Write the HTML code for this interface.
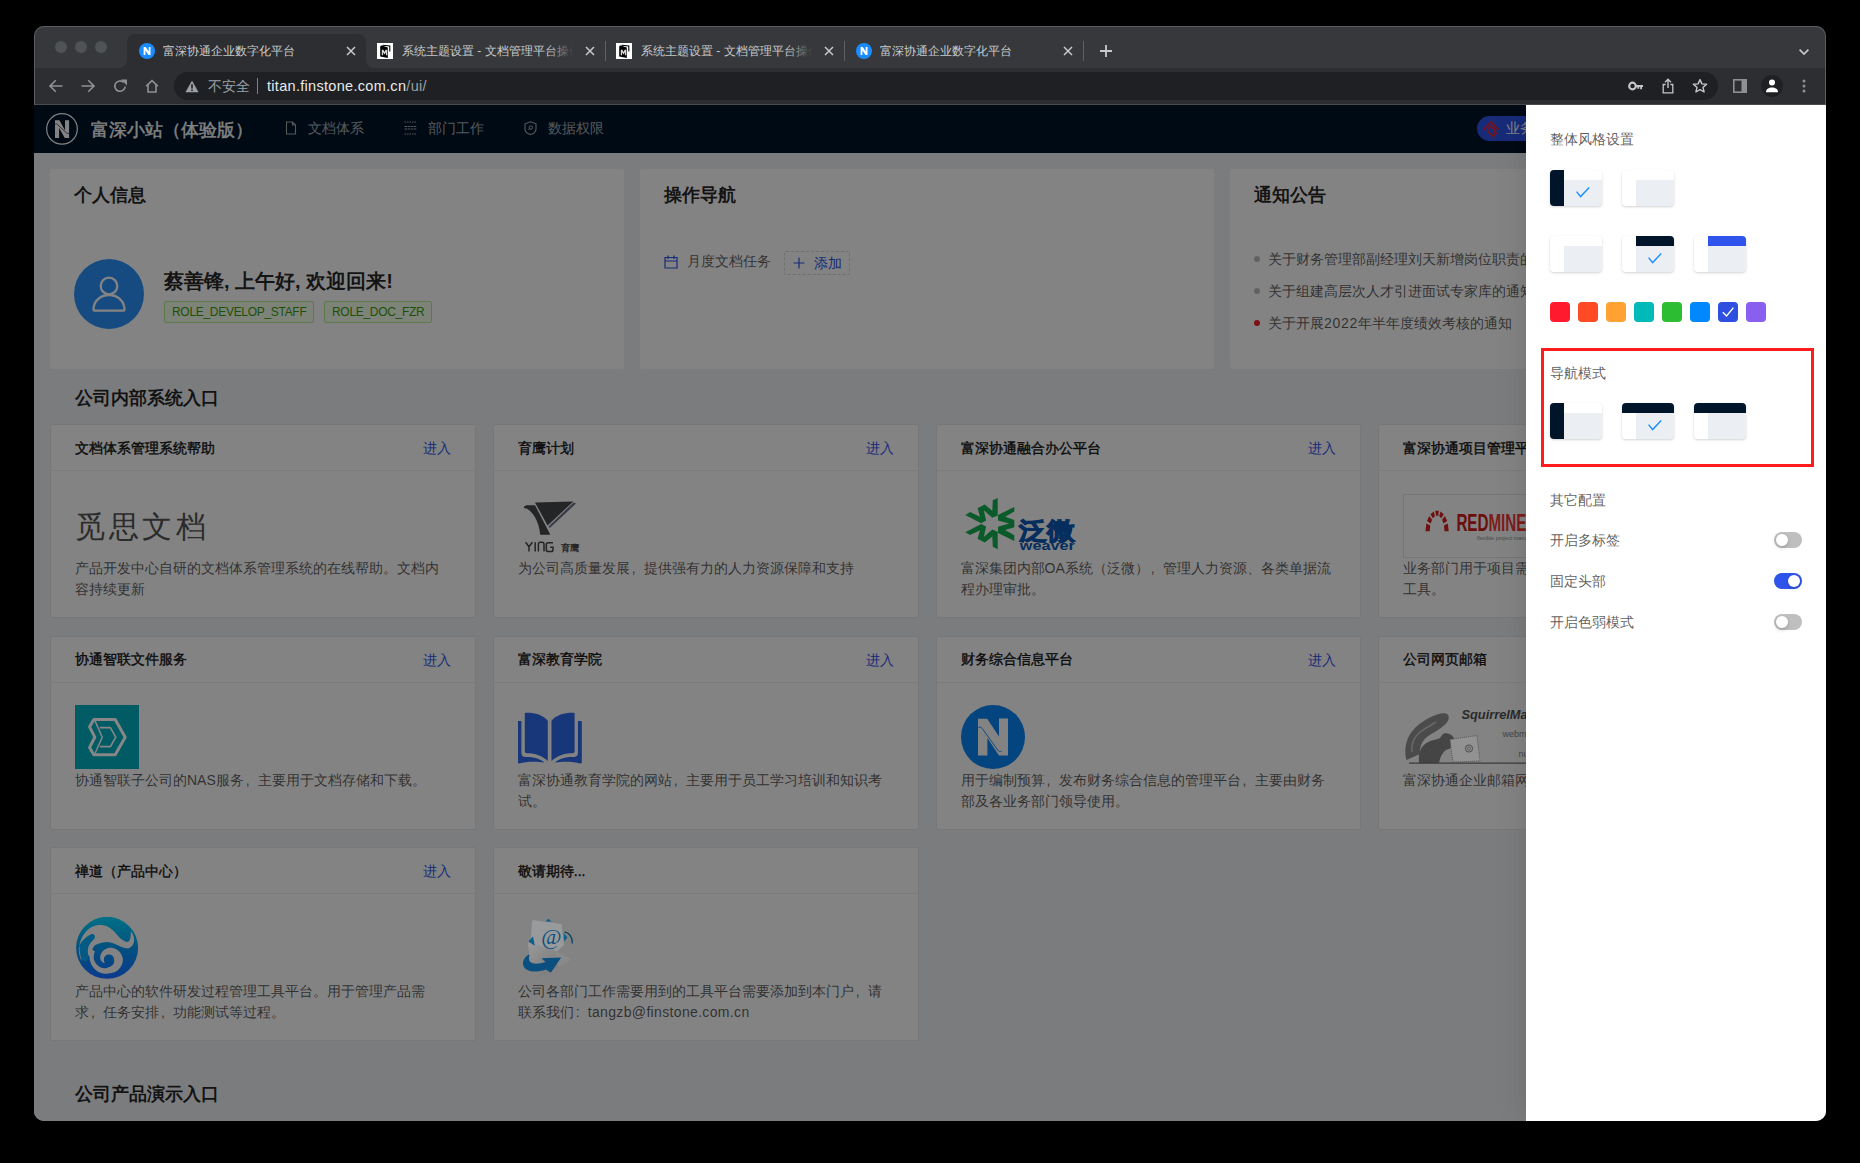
<!DOCTYPE html>
<html><head><meta charset="utf-8">
<style>
*{box-sizing:border-box;margin:0;padding:0}
html,body{width:1860px;height:1163px;overflow:hidden;background:#000;font-family:"Liberation Sans",sans-serif}
.abs{position:absolute}
.cm{display:inline-block;width:14px;text-indent:2px;font-size:14px}
.lg{z-index:6}
#win{position:absolute;left:34px;top:26px;width:1792px;height:1095px;border-radius:10px;overflow:hidden;background:#36383b}
#winborder{position:absolute;left:34px;top:26px;width:1792px;height:79px;border-radius:10px 10px 0 0;border:1px solid #5c5d60;border-bottom:none;pointer-events:none;z-index:50}
.tab{position:absolute;top:8px;height:34px;width:239px}
.tab .ttl{position:absolute;left:36px;top:9px;font-size:12px;line-height:16px;color:#c8cacc;white-space:nowrap;overflow:hidden;width:142px}
.tab .fade{position:absolute;left:150px;top:8px;width:30px;height:18px;background:linear-gradient(90deg,rgba(55,56,59,0),#37383b)}
.tab .x{position:absolute;left:219px;top:12px}
.sep{position:absolute;top:15px;width:1px;height:20px;background:#606164}
#toolbar{position:absolute;left:0;top:42px;width:1792px;height:36px;background:#2d2e31}
#tbline{position:absolute;left:0;top:78px;width:1792px;height:1px;background:#4a4b4e}
#omni{position:absolute;left:140px;top:4px;width:1544px;height:28px;border-radius:14px;background:#1f2023}
#page{position:absolute;left:0;top:79px;width:1792px;height:1016px;background:#f0f2f5;overflow:hidden}
#hdr{position:absolute;left:0;top:0;width:1792px;height:48px;background:#001529}
.card{position:absolute;background:#fff;border-radius:2px}
.ctitle{position:absolute;left:24px;top:15px;font-size:18px;line-height:22px;font-weight:bold;color:rgba(0,0,0,.85)}
.sect{position:absolute;left:41px;font-size:18px;line-height:22px;font-weight:bold;color:rgba(0,0,0,.85)}
.app{position:absolute;background:#fff;border:1px solid #e8e8e8;border-radius:2px;width:425.75px;height:194px}
.app .hd{position:absolute;left:0;top:0;right:0;height:46px;border-bottom:1px solid #f0f0f0}
.app .hd .t{position:absolute;left:24px;top:11.5px;font-size:14px;line-height:22px;color:rgba(0,0,0,.85);white-space:nowrap;-webkit-text-stroke:.45px rgba(0,0,0,.85)}
.app .hd .go{position:absolute;right:24px;top:12px;font-size:14px;line-height:22px;color:#2f54eb}
.app .logo{position:absolute;left:24px;top:69px;width:64px;height:64px}
.app .desc{position:absolute;left:24px;top:133px;width:380px;font-size:14px;line-height:21px;color:rgba(0,0,0,.65)}
#mask{z-index:5;position:absolute;left:0;top:0;width:1792px;height:1016px;background:rgba(0,0,0,.486)}
#drawer{z-index:20;box-shadow:-6px 0 16px -8px rgba(0,0,0,.08),-9px 0 28px 0 rgba(0,0,0,.05);position:absolute;left:1492px;top:0;width:300px;height:1016px;background:#fff}
.dt{position:absolute;left:24px;font-size:14px;line-height:20px;color:rgba(0,0,0,.65)}
.blk{position:absolute;width:52px;height:36px;border-radius:4px;background:#ebeef3;box-shadow:0 1px 2.5px rgba(0,0,0,.18);overflow:hidden}
.blk i{position:absolute;display:block}
.sw{position:absolute;top:197px;width:20px;height:20px;border-radius:4px}
.tog{position:absolute;left:248px;width:28px;height:16px;border-radius:8px;background:#bfbfbf}
.tog b{position:absolute;top:2px;left:2px;width:12px;height:12px;border-radius:6px;background:#fff;box-shadow:0 2px 4px rgba(0,35,11,.2)}
</style></head><body>
<div id="win">
  <!-- traffic lights -->
  <div class="abs" style="left:21px;top:15px;width:12px;height:12px;border-radius:6px;background:#505356"></div>
  <div class="abs" style="left:41px;top:15px;width:12px;height:12px;border-radius:6px;background:#505356"></div>
  <div class="abs" style="left:61px;top:15px;width:12px;height:12px;border-radius:6px;background:#505356"></div>
  <!-- active tab -->
  <div class="abs" style="left:93px;top:8px;width:239px;height:34px;background:#2d2e31;border-radius:8px 8px 0 0"></div>
  <div class="abs" style="left:85px;top:34px;width:8px;height:8px;background:#2d2e31"><div style="width:8px;height:8px;background:#36383b;border-bottom-right-radius:8px"></div></div><div class="abs" style="left:332px;top:34px;width:8px;height:8px;background:#2d2e31"><div style="width:8px;height:8px;background:#36383b;border-bottom-left-radius:8px"></div></div><div id="tabs"><svg class="abs" style="left:105px;top:17px" width="16" height="16" viewBox="0 0 16 16"><circle cx="8" cy="8" r="8" fill="#1a8cff"/><path d="M4.6 12V4h2.1l3 4.6V4h1.8v8h-2L6.4 7.4V12z" fill="#fff"/></svg><div class="abs" style="left:129px;top:17px;font-size:12px;line-height:16px;color:#c8cacc;white-space:nowrap;overflow:hidden;width:170px">富深协通企业数字化平台</div><svg class="abs" style="left:312px;top:20px" width="10" height="10" viewBox="0 0 10 10"><path d="M1 1l8 8M9 1l-8 8" stroke="#c8cacc" stroke-width="1.5"/></svg><svg class="abs" style="left:343px;top:17px" width="16" height="16" viewBox="0 0 16 16"><rect width="16" height="16" fill="#fff"/><path d="M3.2 3.6Q3.6 2.4 5 2.6L10.8 4.6V14.9L3.2 13.4z" fill="#000"/><path d="M5.6 2.2 12.8 2.9V8.4" stroke="#000" stroke-width="1.1" fill="none"/><path d="M4.8 12.2V6.8H6.4L7.5 9 8.6 6.8H10.2V12.2H8.9V9.2L7.5 11.4 6.1 9.2V12.2z" fill="#d8d8d8"/></svg><div class="abs" style="left:368px;top:17px;font-size:12px;line-height:16px;color:#c8cacc;white-space:nowrap;overflow:hidden;width:176px">系统主题设置 - 文档管理平台操作手册</div><div class="abs" style="left:514px;top:16px;width:30px;height:18px;background:linear-gradient(90deg,rgba(54,56,59,0),#36383b 85%)"></div><svg class="abs" style="left:551px;top:20px" width="10" height="10" viewBox="0 0 10 10"><path d="M1 1l8 8M9 1l-8 8" stroke="#c8cacc" stroke-width="1.5"/></svg><svg class="abs" style="left:582px;top:17px" width="16" height="16" viewBox="0 0 16 16"><rect width="16" height="16" fill="#fff"/><path d="M3.2 3.6Q3.6 2.4 5 2.6L10.8 4.6V14.9L3.2 13.4z" fill="#000"/><path d="M5.6 2.2 12.8 2.9V8.4" stroke="#000" stroke-width="1.1" fill="none"/><path d="M4.8 12.2V6.8H6.4L7.5 9 8.6 6.8H10.2V12.2H8.9V9.2L7.5 11.4 6.1 9.2V12.2z" fill="#d8d8d8"/></svg><div class="abs" style="left:607px;top:17px;font-size:12px;line-height:16px;color:#c8cacc;white-space:nowrap;overflow:hidden;width:176px">系统主题设置 - 文档管理平台操作手册</div><div class="abs" style="left:753px;top:16px;width:30px;height:18px;background:linear-gradient(90deg,rgba(54,56,59,0),#36383b 85%)"></div><svg class="abs" style="left:790px;top:20px" width="10" height="10" viewBox="0 0 10 10"><path d="M1 1l8 8M9 1l-8 8" stroke="#c8cacc" stroke-width="1.5"/></svg><svg class="abs" style="left:822px;top:17px" width="16" height="16" viewBox="0 0 16 16"><circle cx="8" cy="8" r="8" fill="#1a8cff"/><path d="M4.6 12V4h2.1l3 4.6V4h1.8v8h-2L6.4 7.4V12z" fill="#fff"/></svg><div class="abs" style="left:846px;top:17px;font-size:12px;line-height:16px;color:#c8cacc;white-space:nowrap;overflow:hidden;width:170px">富深协通企业数字化平台</div><svg class="abs" style="left:1029px;top:20px" width="10" height="10" viewBox="0 0 10 10"><path d="M1 1l8 8M9 1l-8 8" stroke="#c8cacc" stroke-width="1.5"/></svg><div class="sep" style="left:571px"></div><div class="sep" style="left:810px"></div><div class="sep" style="left:1049px"></div><svg class="abs" style="left:1065px;top:18px" width="14" height="14" viewBox="0 0 14 14"><path d="M7 1v12M1 7h12" stroke="#c8cacc" stroke-width="1.8"/></svg><svg class="abs" style="left:1764px;top:21.5px" width="12" height="8" viewBox="0 0 12 8"><path d="M1.6 1.6l4.4 4.4 4.4-4.4" stroke="#c8cacc" stroke-width="1.6" fill="none"/></svg></div>
  <div id="toolbar"><svg class="abs" style="left:14px;top:10px" width="16" height="16" viewBox="0 0 16 16"><path d="M14.5 8H2.2M7.8 2.2 2 8l5.8 5.8" stroke="#8e9093" stroke-width="1.6" fill="none"/></svg><svg class="abs" style="left:46px;top:10px" width="16" height="16" viewBox="0 0 16 16"><path d="M1.5 8h12.3M8.2 2.2 14 8l-5.8 5.8" stroke="#8e9093" stroke-width="1.6" fill="none"/></svg><svg class="abs" style="left:78px;top:10px" width="16" height="16" viewBox="0 0 16 16"><path d="M13.2 8.6A5.2 5.2 0 1 1 11.6 4.3" stroke="#8e9093" stroke-width="1.6" fill="none"/><path d="M9 1.5h6v6z" fill="#8e9093"/></svg><svg class="abs" style="left:110px;top:10px" width="16" height="16" viewBox="0 0 16 16"><path d="M2.2 8.2 8 2.6l5.8 5.6M4 7v7h8V7" stroke="#8e9093" stroke-width="1.6" fill="none" stroke-linejoin="miter"/></svg><div id="omni"><svg class="abs" style="left:11px;top:8px" width="14" height="13" viewBox="0 0 14 13"><path d="M7 .5 13.6 12.3H.4z" fill="#9aa0a6"/><path d="M6.2 4.3h1.6v4.3H6.2zM6.2 9.6h1.6v1.5H6.2z" fill="#1f2023"/></svg><div class="abs" style="left:34px;top:4px;font-size:14px;line-height:20px;color:#9aa0a6;white-space:nowrap">不安全</div><div class="abs" style="left:83px;top:6px;width:1px;height:16px;background:#7d8185"></div><div class="abs" style="left:93px;top:4px;font-size:14.5px;line-height:20px;color:#e8eaed;white-space:nowrap;letter-spacing:.3px">titan.finstone.com.cn<span style="color:#9aa0a6">/ui/</span></div><svg class="abs" style="left:1454px;top:7px" width="16" height="14" viewBox="0 0 16 14"><circle cx="4.5" cy="7" r="3.3" stroke="#c4c6c9" stroke-width="2.2" fill="none"/><path d="M7.5 5.9h7.5v2.2h-1v2.2h-1.8V8.1h-1v1.6H9.4V8.1H7.5z" fill="#c4c6c9"/></svg><svg class="abs" style="left:1488px;top:6px" width="12" height="16" viewBox="0 0 12 16"><path d="M6 10V1.5M3 4.3 6 1.3l3 3" stroke="#c4c6c9" stroke-width="1.4" fill="none"/><path d="M3.6 6.5H1.2v8.3h9.6V6.5H8.4" stroke="#c4c6c9" stroke-width="1.3" fill="none"/></svg><svg class="abs" style="left:1518px;top:6px" width="16" height="16" viewBox="0 0 16 16"><path d="M8 1.6l1.9 4.3 4.7.4-3.6 3.1 1.1 4.6L8 11.6 3.9 14l1.1-4.6L1.4 6.3l4.7-.4z" stroke="#c4c6c9" stroke-width="1.4" fill="none" stroke-linejoin="round"/></svg></div><svg class="abs" style="left:1699px;top:11px" width="14" height="14" viewBox="0 0 14 14"><rect x=".8" y=".8" width="12.4" height="12.4" stroke="#8e9093" stroke-width="1.6" fill="none"/><rect x="8.5" y="1" width="4.5" height="12" fill="#8e9093"/></svg><div class="abs" style="left:1727px;top:7px;width:22px;height:22px;border-radius:11px;background:#1f2023"></div><svg class="abs" style="left:1731px;top:11px" width="14" height="14" viewBox="0 0 14 14"><circle cx="7" cy="3.6" r="3" fill="#fff"/><path d="M1 13.2c0-3 2.7-4.6 6-4.6s6 1.6 6 4.6z" fill="#fff"/></svg><svg class="abs" style="left:1768px;top:11px" width="4" height="14" viewBox="0 0 4 14"><circle cx="2" cy="2" r="1.5" fill="#8e9093"/><circle cx="2" cy="7" r="1.5" fill="#8e9093"/><circle cx="2" cy="12" r="1.5" fill="#8e9093"/></svg></div>
  <div id="tbline"></div>
  <div id="page">
    <div id="hdr"><svg class="abs" style="left:12px;top:8px" width="32" height="32" viewBox="0 0 32 32"><circle cx="16" cy="15.9" r="15.3" stroke="#fff" stroke-width="1.2" fill="none"/><path d="M9 25V7.3h4.4L19 17.2V7.3h4.1v17.7h-4.3L13.1 15V25z" fill="#fff"/><path d="M9.1 11.3C10 10.5 10.9 10.7 11.6 11.6L20.4 19.8C21.1 20.4 22 20.6 23 20.3" stroke="#001529" stroke-width=".7" fill="none"/></svg><div class="abs" style="left:57px;top:14px;font-size:18px;line-height:22px;color:#fff;white-space:nowrap;-webkit-text-stroke:.4px #fff">富深小站（体验版）</div><svg class="abs" style="left:250px;top:16px" width="14" height="14" viewBox="0 0 14 14"><path d="M2.5 1h6l3 3v9h-9z M8.5 1v3h3" stroke="rgba(255,255,255,.65)" stroke-width="1.1" fill="none"/></svg><div class="abs" style="left:274px;top:13px;font-size:14px;line-height:20px;color:rgba(255,255,255,.65);white-space:nowrap">文档体系</div><svg class="abs" style="left:370px;top:16px" width="13" height="14" viewBox="0 0 13 14"><path d="M.5 1h12M.5 13h12" stroke="rgba(255,255,255,.65)" stroke-width="1" stroke-dasharray="1.5 1" fill="none"/><path d="M.5 5.5h12M.5 8h12" stroke="rgba(255,255,255,.65)" stroke-width="1" stroke-dasharray="2.5 .6" fill="none"/></svg><div class="abs" style="left:394px;top:13px;font-size:14px;line-height:20px;color:rgba(255,255,255,.65);white-space:nowrap">部门工作</div><svg class="abs" style="left:490px;top:16px" width="13" height="14" viewBox="0 0 13 14"><path d="M6.5 .8 12 2.8v5.2c0 2.6-2.4 4.6-5.5 5.6C3.4 12.6 1 10.6 1 8V2.8z" stroke="rgba(255,255,255,.65)" stroke-width="1.1" fill="none"/><circle cx="6.8" cy="6.6" r="1.7" stroke="rgba(255,255,255,.65)" stroke-width="1" fill="none"/><path d="M5.6 7.8 4.4 9" stroke="rgba(255,255,255,.65)" stroke-width="1"/></svg><div class="abs" style="left:514px;top:13px;font-size:14px;line-height:20px;color:rgba(255,255,255,.65);white-space:nowrap">数据权限</div><div class="abs" style="left:1443px;top:11px;width:120px;height:25px;border-radius:12.5px;background:#2f54eb"></div><svg class="abs" style="left:1447px;top:14px" width="20" height="20" viewBox="0 0 20 20"><path d="M2.6 10.8 10 3.2l7.4 7.6" stroke="#e0283c" stroke-width="1.9" fill="none"/><path d="M7.2 10.2 10 7.3l5.2 5.1" stroke="#e0283c" stroke-width="1.9" fill="none"/><path d="M6.2 11.6l5.8 5.8 3-3-2.6-2.6" stroke="#e0283c" stroke-width="1.9" fill="none"/></svg><div class="abs" style="left:1472px;top:13px;font-size:14px;line-height:20px;color:#fff;white-space:nowrap">业务系统</div></div><div class="card" style="left:16px;top:64px;width:574px;height:200px"><div class="ctitle">个人信息</div><div class="abs" style="left:24px;top:90px;width:70px;height:70px;border-radius:35px;background:#2c92fd"></div><svg class="abs" style="left:40px;top:106px" width="38" height="38" viewBox="0 0 38 38"><circle cx="19" cy="11" r="8.3" stroke="#fff" stroke-width="2.3" fill="none"/><path d="M3.5 34.5c0-8.5 7-14.5 15.5-14.5s15.5 6 15.5 14.5c0 1-.8 1.2-1.6 1.2H5.1c-.8 0-1.6-.2-1.6-1.2z" stroke="#fff" stroke-width="2.3" fill="none"/></svg><div class="abs" style="left:114px;top:99.5px;font-size:20px;line-height:24px;font-weight:bold;color:rgba(0,0,0,.85);white-space:nowrap">蔡善锋, 上午好, 欢迎回来!</div><div class="abs" style="left:114px;top:132px;height:22px;padding:0 7px;border:1px solid #b7eb8f;background:#f6ffed;border-radius:2px;font-size:12px;line-height:20px;color:#389e0d;white-space:nowrap;letter-spacing:-.3px">ROLE_DEVELOP_STAFF</div><div class="abs" style="left:274px;top:132px;height:22px;padding:0 7px;border:1px solid #b7eb8f;background:#f6ffed;border-radius:2px;font-size:12px;line-height:20px;color:#389e0d;white-space:nowrap;letter-spacing:-.3px">ROLE_DOC_FZR</div></div><div class="card" style="left:606px;top:64px;width:574px;height:200px"><div class="ctitle">操作导航</div><svg class="abs" style="left:24px;top:86px" width="14" height="14" viewBox="0 0 14 14"><path d="M1 2.5h12v10.5H1zM1 6h12M4 .5v3.5M10 .5v3.5" stroke="#2f54eb" stroke-width="1.2" fill="none"/></svg><div class="abs" style="left:47px;top:82px;font-size:14px;line-height:20px;color:rgba(0,0,0,.65);white-space:nowrap">月度文档任务</div><div class="abs" style="left:144px;top:82px;width:66px;height:24px;border:1px dashed #d9d9d9;border-radius:2px"></div><svg class="abs" style="left:153px;top:88px" width="12" height="12" viewBox="0 0 12 12"><path d="M6 .5v11M.5 6h11" stroke="#2f54eb" stroke-width="1.2"/></svg><div class="abs" style="left:174px;top:84px;font-size:14px;line-height:20px;color:#2f54eb;white-space:nowrap">添加</div></div><div class="card" style="left:1196px;top:64px;width:574px;height:200px"><div class="ctitle">通知公告</div><div class="abs" style="left:24px;top:87px;width:6px;height:6px;border-radius:3px;background:#bfbfbf"></div><div class="abs" style="left:38px;top:80px;font-size:14px;line-height:20px;color:rgba(0,0,0,.65);white-space:nowrap">关于财务管理部副经理刘天新增岗位职责的通知</div><div class="abs" style="left:24px;top:119px;width:6px;height:6px;border-radius:3px;background:#bfbfbf"></div><div class="abs" style="left:38px;top:112px;font-size:14px;line-height:20px;color:rgba(0,0,0,.65);white-space:nowrap">关于组建高层次人才引进面试专家库的通知</div><div class="abs" style="left:24px;top:151px;width:6px;height:6px;border-radius:3px;background:#f5222d"></div><div class="abs" style="left:38px;top:144px;font-size:14px;line-height:20px;color:rgba(0,0,0,.65);white-space:nowrap">关于开展<span style="letter-spacing:.7px">2022</span>年半年度绩效考核的通知</div></div><div class="sect" style="top:282px">公司内部系统入口</div><div class="app" style="left:16.00px;top:319.00px"><div class="hd"><div class="t">文档体系管理系统帮助</div><div class="go">进入</div></div><div class="desc" style="white-space:nowrap">产品开发中心自研的文档体系管理系统的在线帮助。文档内<br>容持续更新</div></div><div class="app" style="left:458.75px;top:319.00px"><div class="hd"><div class="t">育鹰计划</div><div class="go">进入</div></div><div class="desc" style="white-space:nowrap">为公司高质量发展<span class="cm">,</span>提供强有力的人力资源保障和支持</div></div><div class="app" style="left:901.50px;top:319.00px"><div class="hd"><div class="t">富深协通融合办公平台</div><div class="go">进入</div></div><div class="desc" style="white-space:nowrap">富深集团内部OA系统（泛微）<span class="cm">,</span>管理人力资源、各类单据流<br>程办理审批。</div></div><div class="app" style="left:1344.25px;top:319.00px"><div class="hd"><div class="t">富深协通项目管理平台</div><div class="go">进入</div></div><div class="desc" style="white-space:nowrap">业务部门用于项目需求管理和缺陷跟踪的<br>工具。</div></div><div class="app" style="left:16.00px;top:530.50px"><div class="hd"><div class="t">协通智联文件服务</div><div class="go">进入</div></div><div class="desc" style="white-space:nowrap">协通智联子公司的NAS服务<span class="cm">,</span>主要用于文档存储和下载。</div></div><div class="app" style="left:458.75px;top:530.50px"><div class="hd"><div class="t">富深教育学院</div><div class="go">进入</div></div><div class="desc" style="white-space:nowrap">富深协通教育学院的网站<span class="cm">,</span>主要用于员工学习培训和知识考<br>试。</div></div><div class="app" style="left:901.50px;top:530.50px"><div class="hd"><div class="t">财务综合信息平台</div><div class="go">进入</div></div><div class="desc" style="white-space:nowrap">用于编制预算<span class="cm">,</span>发布财务综合信息的管理平台<span class="cm">,</span>主要由财务<br>部及各业务部门领导使用。</div></div><div class="app" style="left:1344.25px;top:530.50px"><div class="hd"><div class="t">公司网页邮箱</div><div class="go">进入</div></div><div class="desc" style="white-space:nowrap">富深协通企业邮箱网页版入口</div></div><div class="app" style="left:16.00px;top:742.00px"><div class="hd"><div class="t">禅道（产品中心）</div><div class="go">进入</div></div><div class="desc" style="white-space:nowrap">产品中心的软件研发过程管理工具平台。用于管理产品需<br>求<span class="cm">,</span>任务安排<span class="cm">,</span>功能测试等过程。</div></div><div class="app" style="left:458.75px;top:742.00px"><div class="hd"><div class="t">敬请期待...</div></div><div class="desc" style="white-space:nowrap">公司各部门工作需要用到的工具平台需要添加到本门户<span class="cm">,</span>请<br>联系我们<span class="cm">:</span><span style="letter-spacing:.34px">tangzb@finstone.com.cn</span></div></div><div class="sect" style="top:978px">公司产品演示入口</div>
    <div id="mask"></div><div class="abs lg" style="left:41.00px;top:389.00px;font-size:30px;line-height:30px;letter-spacing:3.5px;color:#2b2b2b;white-space:nowrap;font-family:'Liberation Serif',serif;top:406.50px">觅思文档</div><svg class="abs lg" style="left:483.75px;top:389.00px" width="64" height="64" viewBox="0 0 64 64"><path d="M17 8.4 55.3 7.4 29.6 31.6z" fill="#232527"/><path d="M55.6 8.4 58 9.6 31.8 34 30.6 32.6z" fill="#3a3b48"/><path d="M6 12.5 8.5 11.3 17 11.2 32.4 40.8H22.2C21.2 27 14 17 8.5 14.6 7.3 14.3 6.3 14.5 6 14z" fill="#232527"/><path d="M7.6 48.2 11 52.8 14.4 48.2M11 52.8V57.6M17.2 48.2V57.6M20.4 57.6V50.2Q20.4 48.2 22.4 48.2H24Q26 48.2 26 50.2V57.6M35 48.8H30.2Q28.3 48.8 28.3 50.6V55.8Q28.3 57.6 30.2 57.6H33.2Q35 57.6 35 55.8V53.2H32.2" stroke="#232527" stroke-width="1.5" fill="none"/><text x="43" y="57.2" font-family="Liberation Sans" font-weight="bold" font-size="9.2" fill="#232527" textLength="18.5" lengthAdjust="spacingAndGlyphs">育鹰</text></svg><svg class="abs lg" style="left:926.50px;top:389.00px" width="116" height="64" viewBox="0 0 116 64"><path d="M4.3 20.9 L9.1 18.1 L19.0 22.8 L16.6 14.3 L23.7 10.5 L31.3 16.7 L31.8 6.3 L36.7 3.9 L36.7 21.4 L31.3 23.7 L22.8 16.2 L25.1 26.6 L20.2 29.2z M4.3 38.2 L9.1 41.0 L19.0 36.3 L16.6 44.8 L23.7 48.6 L31.3 42.4 L31.8 52.8 L36.7 55.2 L36.7 37.7 L31.3 35.4 L22.8 42.9 L25.1 32.5 L20.2 29.9z M37.0 20.9 L53.3 12.9 L53.3 17.6 L44.1 22.8 L53.3 26.1 L53.3 33.2 L44.1 36.0 L53.3 41.2 L53.3 46.9 L37.0 38.9 L37.0 32.7 L48.1 29.4 L37.0 26.6z" fill="#0b5a2a"/><text x="58" y="44.6" font-family="Liberation Sans" font-weight="bold" font-size="24" fill="#052d5e" stroke="#052d5e" stroke-width="1" textLength="56" lengthAdjust="spacingAndGlyphs">泛微</text><text x="58.8" y="55.6" font-family="Liberation Sans" font-weight="bold" font-size="12.6" fill="#052d5e" textLength="55" lengthAdjust="spacingAndGlyphs">weaver</text></svg><svg class="abs lg" style="left:1369.25px;top:389.00px" width="170" height="64" viewBox="0 0 170 64"><rect x=".5" y=".5" width="169" height="63" fill="none" stroke="#767676"/><path d="M22.50 37.20 L23.32 29.58 L27.23 31.43 L26.70 37.20z" fill="#6e1010"/><path d="M24.03 26.99 L26.25 22.03 L29.09 25.71 L27.67 29.47z" fill="#6e1010"/><path d="M27.52 20.24 L30.74 17.49 L31.95 22.27 L29.90 24.35z" fill="#6e1010"/><path d="M32.31 16.85 L35.89 16.85 L35.24 21.79 L32.96 21.79z" fill="#6e1010"/><path d="M37.46 17.49 L40.68 20.24 L38.30 24.35 L36.25 22.27z" fill="#6e1010"/><path d="M41.95 22.03 L44.17 26.99 L40.53 29.47 L39.11 25.71z" fill="#6e1010"/><path d="M44.88 29.58 L45.70 37.20 L41.50 37.20 L40.97 31.43z" fill="#6e1010"/><text x="53.4" y="37" font-family="Liberation Sans" font-weight="bold" font-size="24.7" fill="#6a0e0e" textLength="70" lengthAdjust="spacingAndGlyphs">RED<tspan fill="#7e1c1c">MINE</tspan></text><text x="74" y="45.5" font-family="Liberation Sans" font-size="5.5" fill="#4a4a4a">flexible project management</text></svg><svg class="abs lg" style="left:41.00px;top:600.00px" width="64" height="64" viewBox="0 0 64 64"><rect width="64" height="64" fill="#005b64"/><path d="M18.8 14.4H40.2L50.2 32.2 40.2 49.8H18.8L14.6 42.4 19.8 32.2 14.6 21.8z" fill="none" stroke="#878787" stroke-width="3" stroke-linejoin="round"/><path d="M19.8 15.4 27.2 32.2 19.8 49" fill="none" stroke="#878787" stroke-width="1.5"/><path d="M24.8 22.6H35.4L40.8 32.2 35.4 41.6H24.8" fill="none" stroke="#878787" stroke-width="1.6" stroke-linejoin="round"/></svg><svg class="abs lg" style="left:483.75px;top:600.00px" width="64" height="64" viewBox="0 0 64 64"><g transform="translate(-1.14,-1.9) scale(1.031,1.07)"><path d="M7.7 9.2C15 8.6 25 10.5 30 16.4V54C25 49 16 46.5 9.6 46.8 8.4 46.8 7.7 46 7.7 44.8z" fill="#17377a"/><path d="M56 9.2C48.7 8.6 38.7 10.5 33.6 16.4V54C38.7 49 47.7 46.5 54 46.8 55.3 46.8 56 46 56 44.8z" fill="#17377a"/><path d="M.6 17.6C.6 17 1 16.8 1.6 16.8H4.4V46.5C4.4 49.5 6 50.4 9 50.4 16 50.3 22 51.5 26.6 55.6 19 54.2 8 54.6 2.6 56.4 1.5 56.6.6 56 .6 55z" fill="#17377a"/><path d="M63 17.6C63 17 62.6 16.8 62 16.8H59.2V46.5C59.2 49.5 57.6 50.4 54.6 50.4 47.6 50.3 41.6 51.5 37 55.6 44.6 54.2 55.6 54.6 61 56.4 62.1 56.6 63 56 63 55z" fill="#17377a"/></g></svg><svg class="abs lg" style="left:926.50px;top:600.00px" width="64" height="64" viewBox="0 0 64 64"><circle cx="32" cy="32" r="32" fill="#04457f"/><path d="M17 13.8H26.2L38 31.5V13.6H47V50.4H38L26.4 33V50.4H17z" fill="#838383"/><path d="M17.4 22.6C19 21.8 20.2 22 21 23.2L37 45.4C37.8 46.6 39 46.7 40.5 46.3" fill="none" stroke="#04457f" stroke-width=".9"/></svg><svg class="abs lg" style="left:1369.25px;top:595.00px" width="170" height="64" viewBox="0 0 170 64"><path d="M3.4 60C1.5 52 2 44 6 36 10.5 28 18 22 26 18 33 14.5 39 12.5 43 13.5 47 15 46.5 20 42.5 24 37 29.5 30 32.5 24 37 19 41 16.5 47 17 54 17.5 58 18 60z" fill="#4b4b4b"/><path d="M9 52C8 45 10 39 15 34 20 29 27 26 33 22" stroke="#676767" stroke-width="1.6" fill="none"/><path d="M16 63C15 55 17 48 22 44 27 40 33 40 37 38 39 35 40 33 43 33.2 48 33.5 52 37 51.5 42 51 46 47 49 43 50 40 52 37.5 56 36 63z" fill="#454545"/><path d="M47 39.5 74 35.5 77 61 50 62 48.5 52z" fill="#929292" stroke="#555" stroke-width=".8" stroke-dasharray="1.2 .8"/><circle cx="66" cy="48.5" r="3.6" fill="none" stroke="#444" stroke-width=".9"/><circle cx="66" cy="48.5" r="1.6" fill="none" stroke="#444" stroke-width=".7"/><path d="M6 63.2H170" stroke="#3a3a3a" stroke-width="1.2"/><text x="58.5" y="19.4" font-family="Liberation Sans" font-weight="bold" font-style="italic" font-size="12.8" fill="#2a2a2a">SquirrelMail</text><text x="99.5" y="37" font-family="Liberation Sans" font-size="9" fill="#444">webmail for nuts</text><text x="115.5" y="57" font-family="Liberation Sans" font-size="9" fill="#444">nuts</text></svg><svg class="abs lg" style="left:41.00px;top:812.00px" width="64" height="64" viewBox="0 0 64 64"><defs><linearGradient id="zg" x1="0" y1="0" x2="0" y2="1"><stop offset="0" stop-color="#007186"/><stop offset=".5" stop-color="#03507f"/><stop offset="1" stop-color="#0b3a8d"/></linearGradient><clipPath id="zc"><circle cx="32.1" cy="30.8" r="31"/></clipPath></defs><circle cx="32.1" cy="30.8" r="31" fill="url(#zg)"/><g clip-path="url(#zc)"><path d="M30.04 46.36 L29.16 46.11 L28.28 45.70 L27.44 45.12 L26.66 44.37 L25.97 43.46 L25.40 42.40 L25.23 41.24 L25.21 40.04 L25.36 38.82 L25.69 37.60 L26.19 36.40 L26.86 35.26 L27.70 34.19 L28.70 33.22 L29.85 32.38 L31.13 31.68 L32.52 31.15 L34.00 30.80 L35.54 30.71 L37.10 30.82 L38.66 31.15 L40.18 31.69 L41.65 32.44 L43.02 33.38 L44.27 34.52 L45.37 35.83 L46.31 37.30 L47.06 38.90 L47.59 40.61 L47.90 42.40 L47.78 44.21 L47.43 46.00 L46.84 47.72 L46.04 49.35 L45.03 50.86 L43.83 52.23 L42.46 53.43 L40.95 54.44 L39.32 55.24 L37.60 55.83 L35.81 56.18 L34.00 56.30 L32.13 56.63 L30.17 56.70 L28.16 56.49 L26.15 56.00 L24.17 55.21 L22.26 54.14 L20.47 52.78 L18.84 51.15 L17.42 49.27 L16.23 47.16 L15.31 44.86 L14.70 42.40 L14.51 39.83 L14.66 37.22 L15.16 34.60 L16.03 32.03 L19.93 34.28 L19.25 36.29 L18.86 38.34 L18.74 40.39 L18.90 42.40 L19.65 44.29 L20.62 45.98 L21.78 47.46 L23.09 48.70 L24.50 49.69 L25.97 50.43 L27.47 50.91 L28.95 51.15 L30.37 51.15 L31.71 50.95 L32.93 50.55 L34.00 50.00 L34.96 49.72 L35.85 49.32 L36.66 48.82 L37.37 48.23 L37.97 47.57 L38.45 46.85 L38.83 46.10 L39.08 45.33 L39.22 44.56 L39.25 43.81 L39.17 43.08 L39.00 42.40 L38.96 41.75 L38.83 41.11 L38.62 40.49 L38.33 39.90 L37.97 39.36 L37.54 38.86 L37.04 38.43 L36.50 38.07 L35.91 37.78 L35.29 37.57 L34.65 37.44 L34.00 37.40 L33.35 37.43 L32.70 37.55 L32.08 37.76 L31.48 38.04 L30.93 38.40 L30.43 38.83 L29.99 39.32 L29.61 39.87 L29.31 40.46 L29.09 41.08 L28.95 41.74 L28.90 42.40 L28.86 43.08 L28.91 43.76 L29.06 44.45 L29.29 45.12 L29.62 45.76 L30.04 46.36z" fill="#838383"/><path d="M4.3 29.4C5 22 10 13 17.7 9.5 22 7.8 27.3 7.8 30 8.6 36 10.5 40 15.5 43.1 19.1 46 22.4 49.3 24.6 52 25 54.5 25 55.8 22.5 55.9 14.3 58.5 17 59.6 21.9 59 24.8 58.2 28.5 55.5 31.2 52.5 31.4 49.5 31.2 46.5 30.2 44 28.8 40 26.6 36.5 25.4 32.5 24.9 28 25.1 23.5 26 19.5 28.5 17 32 15.6 36 15.2 40 14.6 42 z" fill="#838383"/><path d="M4.3 28.8C6 25 9 21 15.6 17.4 18 16.4 20.5 17.5 19.8 20.5 19.3 22.5 16.5 24.5 14.9 26.7 13 29.5 12.5 33 13 37 13.4 39.5 14 41.5 12.5 43.5 10.5 45 7.5 44 6 42 4.8 39 4 34 4.3 28.8z" fill="#035a85"/><path d="M4.2 30C4.2 35 4.8 39.5 6.2 42.5" stroke="#838383" stroke-width=".8" fill="none"/></g></svg><svg class="abs lg" style="left:483.75px;top:812.00px" width="64" height="64" viewBox="0 0 64 64"><defs><linearGradient id="eg" x1="0" y1="0" x2="1" y2="1"><stop offset="0" stop-color="#9a9a9a"/><stop offset="1" stop-color="#6e6e6e"/></linearGradient></defs><path d="M14.3 3 43.5 7.1 46 28 37 36 12 30z" fill="#999a9b"/><path d="M9.8 25.3 36.3 32.9 54.2 42.5 17.7 61.8 12 45z" fill="url(#eg)"/><path d="M36.3 32.9 54.2 42.5 40 50z" fill="#8a8a8a"/><path d="M27.5 4.6 30.4 1.8 33.6 4.6z" fill="#0b5f8c"/><path d="M10.5 24.6 15 19.2 16.8 28.8z" fill="#0b5f8c"/><path d="M45.6 16 49.4 20.5 46.2 24.4z" fill="#0b5f8c"/><path d="M46.5 15.2C51 15.6 54.5 19.5 54.3 26.5" fill="none" stroke="#07405f" stroke-width="1.3"/><text x="23.3" y="26.5" font-family="Liberation Serif" font-size="22" fill="#0b4f80">@</text><path d="M10.6 37.5C6 40.5 4 45 5.5 49 7.5 54.5 17 56.5 28 52.5L32.8 55.8 43.2 40.4 23.5 41.2 27.5 45C20 47.5 13.5 47 11.8 44.6 10.5 42.5 10.7 40 11.6 38.2z" fill="#0a4f80"/></svg>
    <div id="drawer"><div class="dt" style="top:23.6px">整体风格设置</div><div class="blk" style="left:24px;top:65px"><i style="left:0;top:0;width:14px;height:36px;background:#001529"></i><i style="left:14px;top:0;width:38px;height:10px;background:#fff"></i><svg class="abs" style="left:0;top:0" width="52" height="36" viewBox="0 0 52 36"><path d="M26.6 21.6 30.6 26.6 39.2 17.6" stroke="#1890ff" stroke-width="1.4" fill="none"/></svg></div><div class="blk" style="left:96px;top:65px"><i style="left:0;top:0;width:14px;height:36px;background:#fff"></i><i style="left:14px;top:0;width:38px;height:10px;background:#fff"></i></div><div class="blk" style="left:24px;top:131px"><i style="left:0;top:0;width:14px;height:36px;background:#fff"></i><i style="left:14px;top:0;width:38px;height:10px;background:#fff"></i></div><div class="blk" style="left:96px;top:131px"><i style="left:0;top:0;width:14px;height:36px;background:#fff"></i><i style="left:14px;top:0;width:38px;height:10px;background:#001529"></i><svg class="abs" style="left:0;top:0" width="52" height="36" viewBox="0 0 52 36"><path d="M26.6 21.6 30.6 26.6 39.2 17.6" stroke="#1890ff" stroke-width="1.4" fill="none"/></svg></div><div class="blk" style="left:168px;top:131px"><i style="left:0;top:0;width:14px;height:36px;background:#fff"></i><i style="left:14px;top:0;width:38px;height:10px;background:#2f54eb"></i></div><div class="sw" style="left:24px;background:#ff1a2e"></div><div class="sw" style="left:52px;background:#ff4b24"></div><div class="sw" style="left:80px;background:#ffa232"></div><div class="sw" style="left:108px;background:#00b9b9"></div><div class="sw" style="left:136px;background:#2dbd33"></div><div class="sw" style="left:164px;background:#0088ff"></div><div class="sw" style="left:192px;background:#2e4fe0"></div><div class="sw" style="left:220px;background:#8a5ff0"></div><svg class="abs" style="left:192px;top:197px" width="20" height="20" viewBox="0 0 20 20"><path d="M4.8 10.2 8.6 14 15.4 5.6" stroke="#fff" stroke-width="1.4" fill="none"/></svg><div class="abs" style="left:15px;top:243px;width:273px;height:119px;border:3px solid #ff1c1c"></div><div class="dt" style="top:257.6px">导航模式</div><div class="blk" style="left:24px;top:298px"><i style="left:0;top:0;width:14px;height:36px;background:#001529"></i><i style="left:14px;top:0;width:38px;height:10px;background:#fff"></i></div><div class="blk" style="left:96px;top:298px"><i style="left:0;top:0;width:14px;height:36px;background:#fff"></i><i style="left:0;top:0;width:52px;height:10px;background:#001529"></i><svg class="abs" style="left:0;top:0" width="52" height="36" viewBox="0 0 52 36"><path d="M26.6 21.6 30.6 26.6 39.2 17.6" stroke="#1890ff" stroke-width="1.4" fill="none"/></svg></div><div class="blk" style="left:168px;top:298px"><i style="left:0;top:0;width:14px;height:36px;background:#fff"></i><i style="left:0;top:0;width:52px;height:10px;background:#001529"></i></div><div class="dt" style="top:385.0px">其它配置</div><div class="dt" style="top:425.0px">开启多标签</div><div class="dt" style="top:466.0px">固定头部</div><div class="dt" style="top:507.0px">开启色弱模式</div><div class="tog" style="top:427px"><b></b></div><div class="tog" style="top:468px;background:#2f54eb"><b style="left:14px"></b></div><div class="tog" style="top:509px"><b></b></div></div>
  </div>
</div>
<div id="winborder"></div>
</body></html>
